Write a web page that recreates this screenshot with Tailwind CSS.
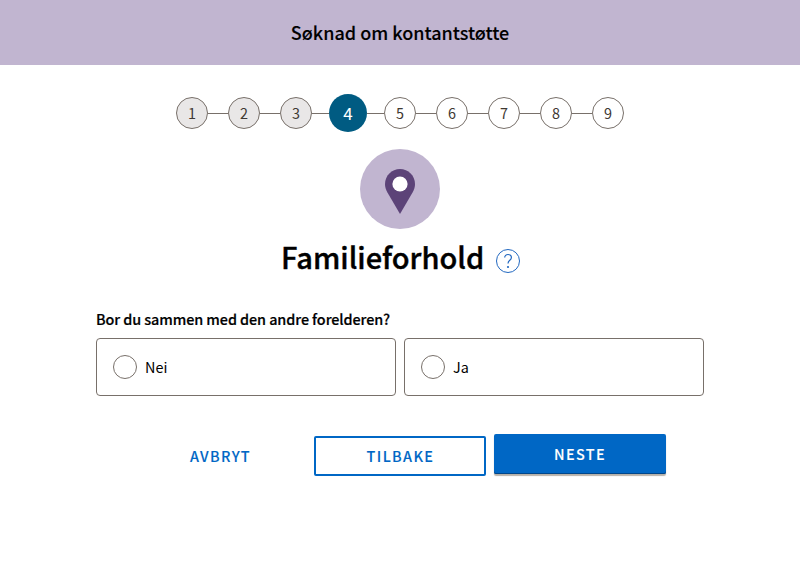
<!DOCTYPE html>
<html lang="nb">
<head>
<meta charset="utf-8">
<title>Søknad om kontantstøtte</title>
<script src="https://cdn.jsdelivr.net/npm/@tailwindcss/browser@4"></script>
</head>
<body class="h-[572px] overflow-hidden bg-white text-black font-['Noto_Sans_CJK_JP','Noto_Sans',sans-serif]">
<header class="flex h-[65px] items-center justify-center bg-[#c1b5d0] pb-[2px]">
  <h1 class="text-[18px] leading-[26px] font-medium [-webkit-text-stroke:0.1px_currentColor]">Søknad om kontantstøtte</h1>
</header>
<main class="flex flex-col items-center">
  <ol class="mt-[29px] flex h-[38px] items-center text-[14.4px] leading-none text-[#3e3832]">
    <li class="flex size-8 items-center justify-center rounded-full border border-[#78706a] bg-[#e9e7e7]">1</li>
    <li class="h-px w-5 bg-[#78706a]"></li>
    <li class="flex size-8 items-center justify-center rounded-full border border-[#78706a] bg-[#e9e7e7]">2</li>
    <li class="h-px w-5 bg-[#78706a]"></li>
    <li class="flex size-8 items-center justify-center rounded-full border border-[#78706a] bg-[#e9e7e7]">3</li>
    <li class="h-px w-[17px] bg-[#78706a]"></li>
    <li class="flex size-[38px] items-center justify-center rounded-full bg-[#005b82] pb-[2px] text-[17px] text-white">4</li>
    <li class="h-px w-[17px] bg-[#78706a]"></li>
    <li class="flex size-8 items-center justify-center rounded-full border border-[#78706a]">5</li>
    <li class="h-px w-5 bg-[#78706a]"></li>
    <li class="flex size-8 items-center justify-center rounded-full border border-[#78706a]">6</li>
    <li class="h-px w-5 bg-[#78706a]"></li>
    <li class="flex size-8 items-center justify-center rounded-full border border-[#78706a]">7</li>
    <li class="h-px w-5 bg-[#78706a]"></li>
    <li class="flex size-8 items-center justify-center rounded-full border border-[#78706a]">8</li>
    <li class="h-px w-5 bg-[#78706a]"></li>
    <li class="flex size-8 items-center justify-center rounded-full border border-[#78706a]">9</li>
  </ol>
  <svg class="mt-[17px] size-20" viewBox="0 0 80 80">
    <circle cx="40" cy="40" r="40" fill="#c1b5d0"/>
    <path d="M40 20c8.300 0 15 6.700 15 15 0 3-.9 5.500-2.300 8.200L40 65 27.300 43.200C25.900 40.500 25 38 25 35c0-8.300 6.700-15 15-15Z" fill="#5c4378"/>
    <circle cx="40" cy="35" r="7.600" fill="#fff"/>
  </svg>
  <div class="mt-[7px] flex h-10 w-[239px] items-center justify-between">
    <h2 class="pl-[0.5px] text-[29px] leading-10 font-medium [-webkit-text-stroke:0.4px_currentColor]">Familieforhold</h2>
    <svg class="mt-[10px] size-6" viewBox="0 0 24 24" fill="none" stroke="#2268c0">
      <circle cx="12" cy="12" r="11.500"/>
      <path d="M8.700 8.600c0-1.900 1.400-3.100 3.300-3.100s3.400 1.300 3.400 3.100c0 2.900-3.400 2.600-3.400 5.900" stroke-width="1.200"/>
      <circle cx="12" cy="18" r="1.100" fill="#2268c0" stroke="none"/>
    </svg>
  </div>
  <section class="mt-[33px] w-[608px]">
    <h3 class="h-[20px] text-[14.4px] leading-[20px] font-medium tracking-[-0.08px] [-webkit-text-stroke:0.2px_currentColor]">Bor du sammen med den andre forelderen?</h3>
    <div class="mt-[9px] flex gap-2 text-[14.4px] leading-5">
      <label class="flex h-[58px] flex-1 items-center gap-2 rounded-[4px] border border-[#78706a] px-4"><span class="size-6 rounded-full border border-[#78706a]"></span><span>Nei</span></label>
      <label class="flex h-[58px] flex-1 items-center gap-2 rounded-[4px] border border-[#78706a] px-4"><span class="size-6 rounded-full border border-[#78706a]"></span><span>Ja</span></label>
    </div>
  </section>
  <div class="mt-[38px] flex w-[532px] gap-2 text-[14.4px] leading-5 font-medium tracking-[1.4px] text-[#0067c5] [-webkit-text-stroke:0.1px_currentColor]">
    <button class="mt-[2px] flex h-10 w-[172px] items-center justify-center pl-px">AVBRYT</button>
    <button class="mt-[2px] flex h-10 w-[172px] items-center justify-center rounded-[2px] border-2 border-[#0067c5] pl-px">TILBAKE</button>
    <button class="flex h-10 w-[172px] items-center justify-center rounded-[2px] bg-[#0067c5] text-white shadow-[inset_0_-1px_0_#00468a,0_2px_1px_0_#b7b1a9]">NESTE</button>
  </div>
</main>
</body>
</html>
